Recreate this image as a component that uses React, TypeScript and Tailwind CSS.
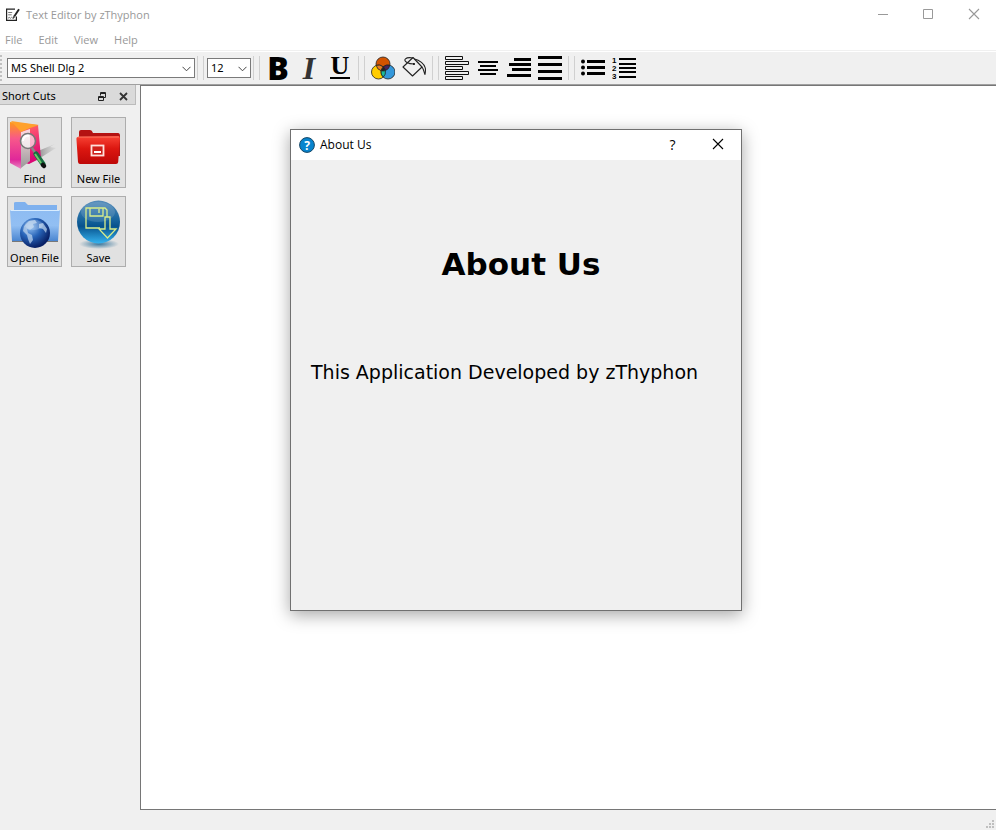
import type { ReactNode } from "react";

const menus = ["File", "Edit", "View", "Help"];

function AppIcon() {
  return (
    <svg width="14" height="14" viewBox="0 0 14 14" fill="none" stroke="#222" strokeWidth="1.2" aria-hidden="true">
      <path d="M9 1.100H.6v11.300h9.800V8.500" />
      <path d="M2.200 4.500h4M2.200 6.800h3.500M2 10.300l1.300-1 1 1 1.200-1 1 .8h1.500" strokeWidth="0.8" stroke="#555" />
      <path d="M8.200 8.600 13 1.200" strokeWidth="1.900" />
      <path d="m7.200 10.300.2-2 1.300.9z" fill="#222" strokeWidth="0.4" />
    </svg>
  );
}

function CloseGlyph({ color }: { color: string }) {
  return (
    <svg width="12" height="12" viewBox="0 0 12 12" stroke={color} strokeWidth="1.100" aria-hidden="true">
      <path d="m1 1 10 10M11 1 1 11" />
    </svg>
  );
}

function TitleButton({ label, children, width }: { label: string; children: ReactNode; width: string }) {
  return (
    <button type="button" aria-label={label} className={`flex h-full items-center justify-center ${width}`}>
      {children}
    </button>
  );
}

function Combo({ label, value, width }: { label: string; value: string; width: string }) {
  return (
    <div className={`relative ${width}`}>
      <select
        aria-label={label}
        defaultValue={value}
        className="block h-5 w-full appearance-none border border-[#7a7a7a] bg-white pl-[3px] text-[11px] leading-[18px] text-black"
      >
        <option>{value}</option>
      </select>
      <svg className="pointer-events-none absolute top-2 right-1" width="9" height="6" viewBox="0 0 9 6" fill="none" stroke="#444" aria-hidden="true">
        <path d="m.5.8 4 4 4-4" />
      </svg>
    </div>
  );
}

function ToolGroup({ children, last = false }: { children: ReactNode; last?: boolean }) {
  return (
    <div className={`flex h-6 items-center gap-[7px] border-l border-[#d0d0d0] px-1.5 ${last ? "" : "border-r"}`}>
      {children}
    </div>
  );
}

function Tool({ label, children }: { label: string; children: ReactNode }) {
  return (
    <button type="button" aria-label={label} className="flex h-6 w-6 items-center justify-center text-black">
      <svg width="24" height="24" viewBox="0 0 24 24" aria-hidden="true">
        {children}
      </svg>
    </button>
  );
}

function Shortcut({ label, children }: { label: string; children: ReactNode }) {
  return (
    <button type="button" className="flex h-[71px] flex-col items-center border border-[#adadad] bg-[#e1e1e1] text-[11px] leading-4">
      <svg width="53" height="53" viewBox="0 0 53 53" aria-hidden="true">
        {children}
      </svg>
      <span className="whitespace-nowrap">{label}</span>
    </button>
  );
}

function FindArt() {
  return (
    <>
      <defs>
        <linearGradient id="cover" x1="0" y1="0" x2="0.3" y2="1">
          <stop offset="0" stopColor="#ffa21c" />
          <stop offset="0.4" stopColor="#fb4c70" />
          <stop offset="1" stopColor="#db0875" />
        </linearGradient>
        <linearGradient id="spine" x1="0" y1="0" x2="0" y2="1">
          <stop offset="0" stopColor="#ff9a18" />
          <stop offset="0.35" stopColor="#f8588a" />
          <stop offset="0.8" stopColor="#e0289a" />
          <stop offset="1" stopColor="#e88ac4" />
        </linearGradient>
        <linearGradient id="paper" x1="0" y1="0" x2="0" y2="1">
          <stop offset="0" stopColor="#ffd8e2" />
          <stop offset="1" stopColor="#999" />
        </linearGradient>
        <linearGradient id="cast" x1="0" y1="0" x2="1" y2="0">
          <stop offset="0" stopColor="#888" />
          <stop offset="1" stopColor="#ccc" stopOpacity="0.4" />
        </linearGradient>
      </defs>
      <path d="m29 42 19-12-6-1 5-3-17 7z" fill="url(#cast)" />
      <path d="M2 4 30 7l3 33-12 6-8-2z" fill="url(#cover)" />
      <path d="m13 14 9-3v32l-9 7z" fill="url(#paper)" />
      <path d="M2 4 13 13v38L2 45z" fill="url(#spine)" />
      <path d="m3 3 28 4-9 3-9 4z" fill="#ffa12c" />
      <circle cx="20" cy="23" r="7.500" fill="#fff" fillOpacity="0.65" stroke="#777" strokeWidth="1.600" />
      <path d="M15 23c0-4 3-6 6-5" stroke="#fff" strokeWidth="2" fill="none" />
      <path d="m24 30 4 6" stroke="#888" strokeWidth="2.500" />
      <path d="m28 36 7 10" stroke="#176f42" strokeWidth="5" strokeLinecap="round" />
      <path d="m27 36 6 9" stroke="#70c76a" strokeWidth="2" />
      <path d="m35 47 1 1" stroke="#111" strokeWidth="4.500" strokeLinecap="round" />
    </>
  );
}

function NewArt() {
  return (
    <>
      <defs>
        <linearGradient id="red" x1="0" y1="0" x2="0" y2="1">
          <stop offset="0" stopColor="#f94335" />
          <stop offset="0.45" stopColor="#dc1710" />
          <stop offset="1" stopColor="#be0808" />
        </linearGradient>
      </defs>
      <path d="M7 14q0-2 2-2h9q2 0 3 3h25q2 0 2 3v20H7z" fill="#b41212" />
      <path d="M6 19q-2 0-1.500 3L6 44q.3 2 2 2h36q2 0 2.200-2L48 20q0-2-2-2z" fill="url(#red)" />
      <path d="M6 19h41" stroke="#ff7963" />
      <rect x="19.500" y="27.500" width="12" height="10" fill="#cf201a" stroke="#ffe0db" strokeWidth="1.800" />
      <path d="M22 34h7" stroke="#fff" strokeWidth="2" />
    </>
  );
}

function OpenArt() {
  return (
    <>
      <defs>
        <linearGradient id="blue" x1="0" y1="0" x2="0" y2="1">
          <stop offset="0" stopColor="#8ebcf2" />
          <stop offset="0.5" stopColor="#92bff3" />
          <stop offset="1" stopColor="#4a86d1" />
        </linearGradient>
        <radialGradient id="world" cx="0.35" cy="0.3" r="0.7">
          <stop offset="0" stopColor="#8ebef2" />
          <stop offset="0.5" stopColor="#2763b7" />
          <stop offset="1" stopColor="#082065" />
        </radialGradient>
      </defs>
      <path d="M6 6q0-1 2-1h9l3 3h29v15H6z" fill="#7fb1ee" />
      <path d="M2 13h50l-2 31H4z" fill="url(#blue)" />
      <path d="M2.500 13.500h49" stroke="#d7ecff" />
      <path d="M4 44.500h46" stroke="#333" opacity="0.6" />
      <circle cx="27" cy="36" r="15" fill="url(#world)" />
      <path d="m16 29 5-5 6-1 2 3-4 1 1 3-4 3-3-1 1 4 4 2 1 5-3 4-2-5-1-4-4-4zM31 27l4-1 4 6-1 4-3-4-4-1z" fill="#b9d2ec" opacity="0.75" />
      <ellipse cx="26" cy="28" rx="9" ry="5" fill="#fff" opacity="0.2" />
    </>
  );
}

function SaveArt() {
  return (
    <>
      <defs>
        <linearGradient id="ball" x1="0" y1="0" x2="0" y2="1">
          <stop offset="0" stopColor="#548cba" />
          <stop offset="0.45" stopColor="#17649d" />
          <stop offset="0.6" stopColor="#07528d" />
          <stop offset="1" stopColor="#36b3ef" />
        </linearGradient>
        <radialGradient id="shade">
          <stop offset="0" stopColor="#3c789d" />
          <stop offset="1" stopColor="#3c789d" stopOpacity="0" />
        </radialGradient>
      </defs>
      <ellipse cx="27" cy="47" rx="20" ry="5" fill="url(#shade)" />
      <circle cx="26.500" cy="25" r="21.500" fill="url(#ball)" />
      <ellipse cx="26" cy="15" rx="17" ry="10" fill="#fff" opacity="0.13" />
      <g fill="none" stroke="#d9ed8b" strokeWidth="1.300">
        <path d="M28 31H14V11h19l2 2v7M18 11v8h13v-8M27 12v4" />
        <path d="M33 20h5v12h6l-8.500 9L27 32h6z" />
      </g>
    </>
  );
}

export default function App() {
  return (
    <div className="relative flex h-screen flex-col overflow-hidden bg-[#f0f0f0] font-['Noto_Sans',sans-serif] text-[11px] text-black">
      <header className="bg-white text-[#999]">
        <div className="flex h-[30px] items-center pl-1.5">
          <AppIcon />
          <h1 className="ml-1.5 font-['Open_Sans',sans-serif] text-[11px] leading-4">Text Editor by zThyphon</h1>
          <div className="ml-auto flex h-[28px] self-start">
            <TitleButton label="Minimize" width="w-[45px]">
              <svg width="10" height="10" viewBox="0 0 10 10" stroke="#999" aria-hidden="true"><path d="M0 5.500h10" /></svg>
            </TitleButton>
            <TitleButton label="Maximize" width="w-[46px]">
              <svg width="10" height="10" viewBox="0 0 10 10" fill="none" stroke="#999" aria-hidden="true"><path d="M.5.5h9v9h-9z" /></svg>
            </TitleButton>
            <TitleButton label="Close" width="w-[45px]"><CloseGlyph color="#999" /></TitleButton>
          </div>
        </div>
        <nav className="flex h-[21px] items-center gap-4 border-b border-[#f0f0f0] pl-[5px] font-['Open_Sans',sans-serif] text-[11px]">
          {menus.map((menu) => <button key={menu} type="button">{menu}</button>)}
        </nav>
      </header>

      <div className="mt-px flex h-[33px] items-center gap-[5px] border-b border-[#a0a0a0] shadow-[0_-1px_0_#fff]">
        <div className="flex items-center gap-1">
          <div className="h-[26px] w-[3px] border-l-2 border-dotted border-[#c0c0c0]" />
          <div className="flex h-6 items-center border-r border-[#d0d0d0] pr-0.5">
            <Combo label="Font" value="MS Shell Dlg 2" width="w-[188px]" />
          </div>
        </div>
        <div className="flex h-6 items-center border-x border-[#d0d0d0] pr-0.5 pl-[3px]">
          <Combo label="Font size" value="12" width="w-11" />
        </div>
        <ToolGroup>
          <button type="button" aria-label="Bold" className="h-6 w-6 text-[32px] leading-6 font-black">B</button>
          <button type="button" aria-label="Italic" className="h-6 w-6 font-['Liberation_Serif',serif] text-[32px] leading-6 font-bold text-[#333] italic">I</button>
          <button type="button" aria-label="Underline" className="flex h-6 w-6 flex-col items-center font-['Liberation_Serif',serif] text-[26px] leading-5 font-bold">
            <span>U</span>
            <span className="mt-px h-0.5 w-5 shrink-0 bg-black" />
          </button>
        </ToolGroup>
        <ToolGroup>
          <Tool label="Text color">
            <g stroke="#222" strokeWidth="0.8">
              <circle cx="12" cy="8" r="7" fill="#d35400" />
              <circle cx="7.500" cy="16" r="7" fill="#fc0" />
              <circle cx="17" cy="16" r="7" fill="#3498db" />
              <path d="M12.200 10.900A7 7 0 0 1 18.800 9.300 7 7 0 0 1 14.400 14.600 7 7 0 0 0 12.200 10.900z" fill="#4a235a" />
              <path d="M12.200 10.900A7 7 0 0 1 14.400 14.600 7 7 0 0 1 10.100 14.700 7 7 0 0 1 12.200 10.900z" fill="#222" />
              <path d="M10.100 14.700a7 7 0 0 0 4.300-.1 7 7 0 0 1-2.100 6.500 7 7 0 0 1-2.200-6.400z" fill="#1abc9c" />
              <path d="M5.200 9.400a7 7 0 0 1 7 1.500 7 7 0 0 0-2.100 3.800 7 7 0 0 1-4.900-5.300z" fill="#e67e22" />
            </g>
          </Tool>
          <Tool label="Highlight color">
            <g fill="none" stroke="#222" strokeWidth="1.100" strokeLinejoin="round">
              <path d="M11 1.500 20 11l-9.500 9L1 11z" />
              <path d="M12 8C6 8 1 5 3.500 2.800 5 1.500 9 1.600 11 2" />
              <path d="M12.500 3c5 1 10 5 10.800 9 .3 2 .2 4-.3 6.500-1-1.500-1-5-3-7.500" />
            </g>
            <circle cx="12" cy="8" r="1" />
          </Tool>
        </ToolGroup>
        <ToolGroup>
          <Tool label="Align left">
            <g fill="none" stroke="#111">
              <path d="M.5.5h17v3H.5zM.5 5.500h23v3H.5zM.5 10.500h17v3H.5zM.5 15.500h23v3H.5zM.5 20.500h17v3H.5z" />
            </g>
          </Tool>
          <Tool label="Align center"><path d="M2 5h20v2H2zM4 9h16v2H4zM2 13h20v2H2zM4 17h16v2H4z" /></Tool>
          <Tool label="Align right"><path d="M7 2h17v3H7zM2 7h22v3H2zM5 12h19v3H5zM0 18h24v3H0z" /></Tool>
          <Tool label="Justify"><path d="M0 0h24v3H0zM0 7h24v3H0zM0 14h24v3H0zM0 21h24v3H0z" /></Tool>
        </ToolGroup>
        <ToolGroup last>
          <Tool label="Bulleted list">
            <path d="M6 4h18v3H6zM6 10h18v3H6zM6 16h18v3H6z" />
            <circle cx="2" cy="5.500" r="2" /><circle cx="2" cy="11.500" r="2" /><circle cx="2" cy="17.500" r="2" />
          </Tool>
          <Tool label="Numbered list">
            <path d="M7 2h17v2H7zM7 7h17v2H7zM7 11h17v2H7zM7 15h17v2H7zM7 20h17v2H7z" />
            <g fontFamily="Liberation Sans, sans-serif" fontWeight="bold" fontSize="8">
              <text x="0" y="7">1</text><text x="0" y="15">2</text><text x="0" y="23">3</text>
            </g>
          </Tool>
        </ToolGroup>
      </div>

      <div className="flex min-h-0 flex-1">
        <aside className="w-[140px] shrink-0">
          <div className="mr-1 flex h-5 items-center border-r border-b border-[#bbb] bg-[#dadada] pt-1 pr-[7px] pl-0.5">
            <h2 className="text-[11px]">Short Cuts</h2>
            <button type="button" aria-label="Float panel" className="ml-auto">
              <svg width="10" height="10" viewBox="0 0 10 10" fill="none" stroke="#222" aria-hidden="true">
                <path d="M3.500 3.500v-3h5v5H7M3 1.500h6M1.500 4.500h5v4h-5zM1 5.500h6" />
              </svg>
            </button>
            <button type="button" aria-label="Close panel" className="ml-3">
              <svg width="9" height="9" viewBox="0 0 9 9" stroke="#333" strokeWidth="1.800" aria-hidden="true"><path d="m1 1 7 7M8 1 1 8" /></svg>
            </button>
          </div>
          <div className="mt-3 grid grid-cols-[55px_55px] gap-x-[9px] gap-y-2 pl-[7px]">
            <Shortcut label="Find"><FindArt /></Shortcut>
            <Shortcut label="New File"><NewArt /></Shortcut>
            <Shortcut label="Open File"><OpenArt /></Shortcut>
            <Shortcut label="Save"><SaveArt /></Shortcut>
          </div>
        </aside>
        <textarea aria-label="Document" className="min-w-0 flex-1 resize-none border-y border-l border-[#767676] bg-white outline-none" />
      </div>

      <footer className="flex h-5 shrink-0 items-end justify-end pr-0.5 pb-0.5">
        <svg width="8" height="8" viewBox="0 0 8 8" fill="#bfbfbf" aria-hidden="true">
          <path d="M6 0h2v2H6zM3 3h2v2H3zM6 3h2v2H6zM0 6h2v2H0zM3 6h2v2H3zM6 6h2v2H6z" />
        </svg>
      </footer>

      <section role="dialog" aria-labelledby="about-title" className="absolute top-[129px] left-[290px] flex h-[482px] w-[452px] flex-col border border-[#707070] bg-[#f0f0f0] shadow-[0_4px_16px_rgba(0,0,0,0.35)]">
        <div className="flex h-[30px] items-center bg-white pl-2">
          <svg width="16" height="16" viewBox="0 0 16 16" aria-hidden="true">
            <circle cx="8" cy="8" r="7.400" fill="#0784ce" stroke="#174766" />
            <text x="8" y="12.500" textAnchor="middle" fontFamily="Noto Sans, sans-serif" fontSize="12" fontWeight="bold" fill="#fff">?</text>
          </svg>
          <h2 id="about-title" className="ml-[5px] font-['Open_Sans',sans-serif] text-[12px]">About Us</h2>
          <div className="ml-auto flex h-[28px] self-start">
            <TitleButton label="Help" width="w-[45px]"><span className="font-['Open_Sans',sans-serif] text-[14px]">?</span></TitleButton>
            <TitleButton label="Close dialog" width="w-[46px]"><CloseGlyph color="#000" /></TitleButton>
          </div>
        </div>
        <div className="px-5 pt-[84px]">
          <h3 className="pl-2.5 text-center font-['DejaVu_Sans',sans-serif] text-[31px] leading-10 font-bold">About Us</h3>
          <p className="mt-[76px] font-['DejaVu_Sans',sans-serif] text-[19px] leading-6 whitespace-nowrap">This Application Developed by zThyphon</p>
        </div>
      </section>
    </div>
  );
}
